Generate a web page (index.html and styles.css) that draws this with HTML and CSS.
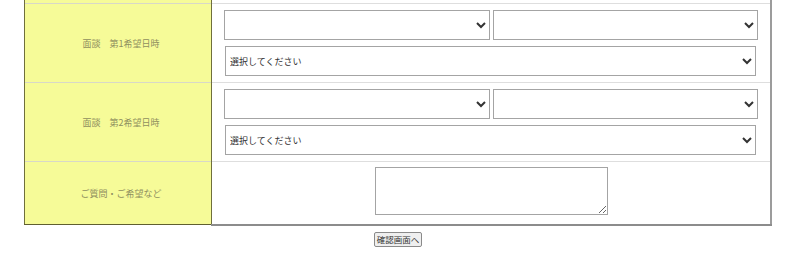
FILE: index.html
```html
<!DOCTYPE html>
<html lang="ja">
<head>
  <meta charset="UTF-8">
  <title>面談予約フォーム</title>
  <link rel="stylesheet" href="styles.css">
</head>
<body>
  <form class="form">
    <table class="entry">
      <tr class="prev">
        <th></th>
        <td></td>
      </tr>
      <tr>
        <th>面談　第1希望日時</th>
        <td>
          <div class="pair">
            <select><option></option></select>
            <select><option></option></select>
          </div>
          <select class="wide"><option>選択してください</option></select>
        </td>
      </tr>
      <tr>
        <th>面談　第2希望日時</th>
        <td>
          <div class="pair">
            <select><option></option></select>
            <select><option></option></select>
          </div>
          <select class="wide"><option>選択してください</option></select>
        </td>
      </tr>
      <tr class="last">
        <th>ご質問・ご希望など</th>
        <td class="center"><textarea></textarea></td>
      </tr>
    </table>
    <div class="submit">
      <button type="button">確認画面へ</button>
    </div>
  </form>
</body>
</html>
```

FILE: styles.css
```css
body {
  margin: 0;
  font-family: "Noto Sans CJK JP", sans-serif;
  background: #fff;
}
.form {
  margin: -18px 0 0 24px;
  width: 748px;
}
.entry {
  width: 748px;
  border-collapse: collapse;
  table-layout: fixed;
}
.entry th {
  width: 186px;
  background: #f6fb98;
  border-left: 1px solid #6f6f3c;
  border-right: 1px solid #6f6f3c;
  border-top: 1px solid #d8d8c8;
  font-weight: normal;
  font-size: 9px;
  color: #8f8f5f;
  text-align: center;
  vertical-align: middle;
  padding: 0 0 0 6px;
}
.entry td {
  border-right: 2px solid #9c9c9c;
  border-top: 1px solid #dedede;
  padding: 6px 12px 6px 12px;
}
.entry .prev th,
.entry .prev td {
  height: 21px;
  padding: 0;
  border-top: none;
}
.entry .last th {
  border-bottom: 1px solid #5f5f30;
  height: 62px;
}
.entry .last td {
  border-bottom: 2px solid #8c8c8c;
  padding: 5px 0 8px;
}
.pair {
  display: flex;
  gap: 3px;
  margin-bottom: 6px;
}
select {
  height: 30px;
  border: 1px solid #a4a4a4;
  border-radius: 0;
  background: #fff;
  font-family: "Noto Sans CJK JP", sans-serif;
  font-size: 9px;
  color: #333;
  padding-left: 0;
}
.pair select {
  flex: 1;
}
.wide {
  display: block;
  width: 531px;
  margin-left: 1px;
}
.center {
  text-align: center;
}
textarea {
  width: 233px;
  height: 48px;
  box-sizing: border-box;
  border: 1px solid #a4a4a4;
  display: block;
  margin: 0 auto;
}
.submit {
  display: flex;
  justify-content: center;
  padding-top: 6px;
}
.submit button {
  font-family: "Noto Sans CJK JP", sans-serif;
  font-size: 8.5px;
  padding: 0 2px;
  height: 15px;
  line-height: 13px;
  border: 1px solid #8a8a8a;
  border-radius: 2px;
  background: #efefef;
  color: #333;
}
```
